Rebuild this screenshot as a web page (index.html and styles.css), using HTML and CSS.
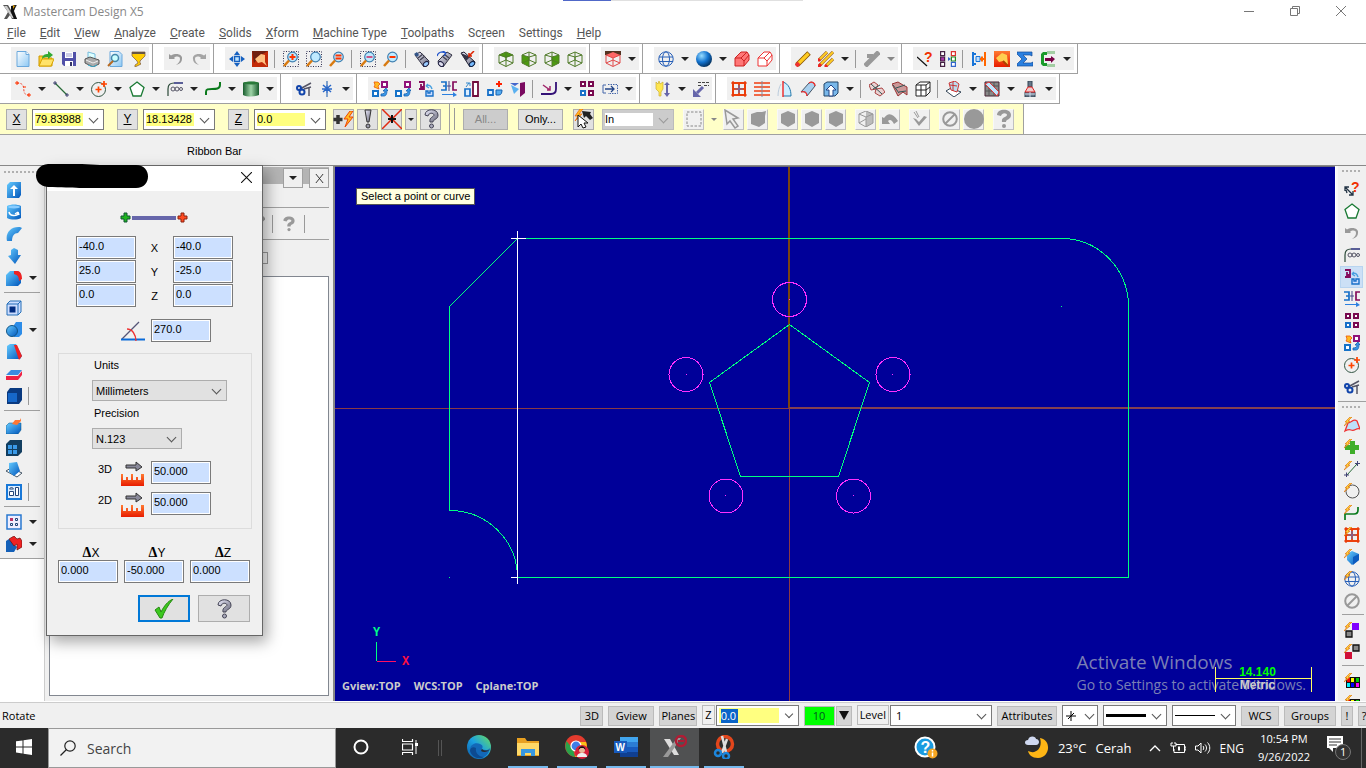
FILE: index.html
```html
<!DOCTYPE html>
<html lang="en">
<head>
    <meta charset="UTF-8">
    <meta name="viewport" content="width=device-width, initial-scale=1.0">
    <title>Mastercam Design X5</title>
    <link rel="stylesheet" href="styles.css">
</head>
<body>
    <!-- icon sprite -->
    <svg class="sprite" aria-hidden="true">
        <defs>
            <linearGradient id="blue" x1="0" y1="0" x2="1" y2="1"><stop offset="0" stop-color="#6cf"/><stop offset="1" stop-color="#05b"/></linearGradient>
            <linearGradient id="sheet" x1="0" y1="0" x2="1" y2="1"><stop offset="0" stop-color="#fff"/><stop offset="1" stop-color="#8cc8f4"/></linearGradient>
            <linearGradient id="green" x1="0" x2="1"><stop offset="0" stop-color="#175c2c"/><stop offset=".5" stop-color="#9fd4a8"/><stop offset="1" stop-color="#175c2c"/></linearGradient>
            <linearGradient id="steel" x1="0" y1="0" x2="1" y2="1"><stop offset="0" stop-color="#eef"/><stop offset="1" stop-color="#667"/></linearGradient>
            <linearGradient id="fire" x1="0" y1="0" x2="0" y2="1"><stop offset="0" stop-color="#ff7a30"/><stop offset="1" stop-color="#e81c00"/></linearGradient>
            <radialGradient id="ball" cx=".35" cy=".3" r=".8"><stop offset="0" stop-color="#9df"/><stop offset=".5" stop-color="#1474d0"/><stop offset="1" stop-color="#024"/></radialGradient>
            <linearGradient id="edge" x1="0" y1="1" x2="1" y2="0"><stop offset="0" stop-color="#0c59a4"/><stop offset=".5" stop-color="#1ba0e2"/><stop offset="1" stop-color="#6be05a"/></linearGradient>
        </defs>
        <symbol id="bolt" viewBox="0 0 16 16"><path d="M6 0L1 5h2L0 9l6-5H4l4-4z" fill="#ffd23a" stroke="#e07818" stroke-width=".7"/></symbol>
        <symbol id="app" viewBox="0 0 16 16"><path d="M1 1h5l3 5 3-5h3l-4 7 4 7h-5l-2-4-3 4H2l4-7z" fill="#555"/><path d="M2 2h3l7 12h-2z" fill="#ccc"/><path d="M9 2l5-1-2 6 3 8h-3L9 8z" fill="#111"/><path d="M11 1l2 1-2 3z" fill="#d90"/></symbol>
        <symbol id="new" viewBox="0 0 16 16"><path d="M2 .5h9l3 3v12H2z" fill="url(#sheet)" stroke="#6aa8dc"/><path d="M11 .5v3h3" fill="#fff" stroke="#6aa8dc"/></symbol>
        <symbol id="open" viewBox="0 0 16 16"><path d="M1 15V5h4l1 2h8v8z" fill="#fc3" stroke="#c90"/><path d="M1 15l3-7h12l-3 7z" fill="#ffe36a" stroke="#d9a400"/><path d="M4 8c0-4 3-5 6-5V0l5 4-5 4V6c-2 0-4 0-6 2z" fill="#3a3"/></symbol>
        <symbol id="save" viewBox="0 0 16 16"><path d="M1 1h14v14H3l-2-2z" fill="#5050a8"/><path d="M4 1h8v6H4zM4 10h8v5H4z" fill="#fff"/><path d="M5 3h6M5 5h6" stroke="#99c"/><path d="M9 11h2v4H9z" fill="#336"/></symbol>
        <symbol id="print" viewBox="0 0 16 16"><path d="M4 1l7 2v6l-7-2z" fill="#dff" stroke="#7bd"/><path d="M1 8l5-2 9 3v4l-6 3-8-4z" fill="#aaa" stroke="#555"/><path d="M2 9l7 3 5-2" stroke="#eee" fill="none"/><path d="M4 14l5 2 4-2" stroke="#3ac" fill="none"/></symbol>
        <symbol id="preview" viewBox="0 0 16 16"><path d="M3 .5h9l3 3v12H3z" fill="url(#sheet)" stroke="#6aa8dc"/><circle cx="8" cy="7" r="3.5" fill="#cff" stroke="#48a" stroke-width="1.5"/><path d="M6 10l-5 5" stroke="#b76a20" stroke-width="2"/></symbol>
        <symbol id="cup" viewBox="0 0 16 16"><path d="M2 1h13v4l-5 5v2l1 1-6 3v-2l3-2-1-2-5-5z" fill="#fc0" stroke="#864" stroke-width=".8"/><path d="M2 1h13v2H2z" fill="#654"/></symbol>
        <symbol id="undo" viewBox="0 0 16 16"><path d="M1 8V3l2 1.500C9 1 15 4 14 8c0 3-2 5-6 6 3-2 4-4 4-6 0-3-4-3-6-1l1 1z" fill="#999"/></symbol>
        <symbol id="redo" viewBox="0 0 16 16"><path d="M15 8V3l-2 1.500C7 1 1 4 2 8c0 3 2 5 6 6-3-2-4-4-4-6 0-3 4-3 6-1L9 8z" fill="#a4a4a4"/></symbol>
        <symbol id="pan" viewBox="0 0 16 16"><path d="M8 0l3 4H5zM8 16l3-4H5zM0 8l4-3v6zM16 8l-4-3v6z" fill="#1560c0"/><path d="M5.500 5.500h5v5h-5z" fill="#bfe4ff" stroke="#1560c0" stroke-width="1.500"/></symbol>
        <symbol id="repaint" viewBox="0 0 16 16"><path d="M0 0h16v16H0z" fill="#c22a08"/><path d="M0 0h16l-7 4-7 8z" fill="#702010"/><path d="M3 8l6-5 4 1v7l2 4-5-4-4 1z" fill="#ffc080"/></symbol>
        <symbol id="repaint2" viewBox="0 0 16 16"><path d="M0 0h16v16H0z" fill="url(#fire)"/><path d="M2 7l6-5 5 2 1 10-5-4-4 1z" fill="#ffcf50"/><path d="M9 10l5 5" stroke="#a40" stroke-width="2"/></symbol>
        <symbol id="lens" viewBox="0 0 16 16"><circle cx="9.500" cy="6" r="4.800" fill="#bfeaff" stroke="#3f7fb0" stroke-width="1.200"/><path d="M6 9.500L1 15" stroke="#d87a10" stroke-width="2.500"/></symbol>
        <symbol id="dots" viewBox="0 0 16 16"><path d="M.5.5h15v15H.5z" fill="none" stroke="#335" stroke-dasharray="1 1.500"/></symbol>
        <symbol id="zoom-in" viewBox="0 0 16 16"><use href="#dots"/><use href="#lens"/><path d="M9.500 3v6M6.500 6h6" stroke="#f30" stroke-width="2"/></symbol>
        <symbol id="zoom-win" viewBox="0 0 16 16"><use href="#dots"/><use href="#lens"/></symbol>
        <symbol id="zoom-eq" viewBox="0 0 16 16"><use href="#lens"/><path d="M6.500 4.500h6M6.500 7.500h6" stroke="#f30" stroke-width="1.800"/></symbol>
        <symbol id="zoom-sel" viewBox="0 0 16 16"><use href="#dots"/><use href="#lens"/><path d="M6.500 6h6" stroke="#c58" stroke-width="2"/></symbol>
        <symbol id="zoom-out" viewBox="0 0 16 16"><use href="#lens"/><path d="M6.500 6h6" stroke="#f30" stroke-width="2"/></symbol>
        <symbol id="spin" viewBox="0 0 16 16"><path d="M1 4l5-3 9 9-1 4-4 2z" fill="url(#steel)" stroke="#334"/><path d="M4 7l5-4M6 9l5-4" stroke="#445" stroke-width="1.500"/><ellipse cx="12" cy="13" rx="3" ry="2" transform="rotate(-40 12 13)" fill="#9cf" stroke="#224"/><path d="M0 3l3-2 2 3-2 2z" fill="#358"/></symbol>
        <symbol id="spin2" viewBox="0 0 16 16"><path d="M15 4l-5-3-9 9 1 4 4 2z" fill="url(#steel)" stroke="#334"/><path d="M12 7L7 3M10 9L5 5" stroke="#445" stroke-width="1.500"/><ellipse cx="4" cy="13" rx="3" ry="2" transform="rotate(40 4 13)" fill="#dde" stroke="#224"/><path d="M0 5c1-4 5-5 9-3M9 2L6 0M9 2L7 5" stroke="#25c" fill="none" stroke-width="1.300"/></symbol>
        <symbol id="spin3" viewBox="0 0 16 16"><path d="M1 2l3-1 11 10-1 3-4 2z" fill="url(#steel)" stroke="#223"/><path d="M1 2l5 8 4-4z" fill="#334"/><ellipse cx="12" cy="13" rx="3" ry="2" transform="rotate(-40 12 13)" fill="#7bf" stroke="#124"/><path d="M14 0L9 5V2M9 5h3" stroke="#d20" stroke-width="1.500" fill="none"/></symbol>
        <symbol id="wirecube" viewBox="0 0 16 16"><path d="M1 4l7-3 7 3v8l-7 3.500L1 12zM1 4l7 2 7-2M8 6v9.500M1 12l7-3 7 3M8 1v8" fill="none" stroke="#4f7a28" stroke-width="1"/></symbol>
        <symbol id="cube-top" viewBox="0 0 16 16"><path d="M1 4l7-3 7 3-7 3z" fill="#4c9a10"/><use href="#wirecube"/></symbol>
        <symbol id="cube-front" viewBox="0 0 16 16"><path d="M1 4l7 2v9.500L1 12z" fill="#4c9a10"/><use href="#wirecube"/></symbol>
        <symbol id="cube-side" viewBox="0 0 16 16"><path d="M8 6l7-2v8l-7 3.500z" fill="#4c9a10"/><use href="#wirecube"/></symbol>
        <symbol id="cplane" viewBox="0 0 16 16"><path d="M0 0h16v4H0z" fill="#532"/><path d="M1 4l7-3 7 3-7 3z" fill="#f66"/><path d="M1 4v8l7 3.500 7-3.500V4L8 7zM8 7v8M1 12l7-3 7 3" fill="none" stroke="#e04848"/></symbol>
        <symbol id="globe" viewBox="0 0 16 16"><g fill="none" stroke="#2860b8"><circle cx="8" cy="8" r="7.200"/><ellipse cx="8" cy="8" rx="3.500" ry="7.200"/><path d="M1 6h14M1 10.500h14"/></g></symbol>
        <symbol id="sphere" viewBox="0 0 16 16"><circle cx="8" cy="8" r="8" fill="url(#ball)"/></symbol>
        <symbol id="redsolid" viewBox="0 0 16 16"><path d="M1 7l6-6h6l2 3v5l-5 6H1z" fill="#f77" stroke="#c22"/><path d="M1 7h6l3 3v5M7 7l6-6M10 10l5-6" fill="none" stroke="#c22"/></symbol>
        <symbol id="redwire" viewBox="0 0 16 16"><path d="M1 7l6-6h6l2 3v5l-5 6H1zM1 7h6l3 3v5M7 7l6-6M10 10l5-6" fill="#fff" stroke="#e33"/></symbol>
        <symbol id="pencil" viewBox="0 0 16 16"><path d="M2 14L14 2" stroke="#850" stroke-width="5"/><path d="M2.500 13.500L13.500 2.500" stroke="#fc2" stroke-width="3.200"/><path d="M1 15l3-3" stroke="#e33" stroke-width="4"/></symbol>
        <symbol id="pencils" viewBox="0 0 16 16"><path d="M1 9l8-8M1 15L15 1M8 15l7-7" stroke="#963" stroke-width="3.200"/><path d="M1 9l8-8M1 15L15 1M8 15l7-7" stroke="#fc2" stroke-width="2"/><path d="M0 10l2-2M0 16l3-3M7 16l2-2" stroke="#e22" stroke-width="3"/></symbol>
        <symbol id="undelete" viewBox="0 0 16 16"><path d="M1 15L15 1" stroke="#999" stroke-width="5"/><path d="M3 3h6v4H3z" fill="#999"/></symbol>
        <symbol id="ask-line" viewBox="0 0 16 16"><path d="M0 6l10 9" stroke="#111" stroke-width="1.300"/><text x="7" y="11" class="glyph" fill="#f03000">?</text></symbol>
        <symbol id="chain" viewBox="0 0 16 16"><g fill="#fff" stroke-width="1.200"><path d="M.6.6h4v4h-4zM.6 11.400h4v4h-4z" stroke="#424"/><path d="M.6 6h4v4h-4z" fill="#a3a" stroke="#424"/><path d="M11.400.6h4v4h-4z" stroke="#d33"/><path d="M11.400 6h4v4h-4z" stroke="#282"/><path d="M11.400 11.400h4v4h-4z" stroke="#36c"/></g><path d="M5 8h3V6l3 2-3 2V8" fill="#36c"/></symbol>
        <symbol id="mate" viewBox="0 0 16 16"><path d="M2 1v14M2 3h3M2 13h3" stroke="#1874d8" stroke-width="2" fill="none"/><path d="M5 5.500h4v5H5z" fill="#bdf" stroke="#1874d8"/><path d="M14 1v14M9 8h5M11 5.500v5" stroke="#f60" stroke-width="2" fill="none"/></symbol>
        <symbol id="sigma" viewBox="0 0 16 16"><path d="M0 1h15v4l-2-1H6l4 4-4 4h8l2-1v4H0v-2l5-5-5-5z" fill="#2a80e0" stroke="#124a9a" stroke-width=".7"/></symbol>
        <symbol id="ram" viewBox="0 0 16 16"><path d="M7 1H3L1 3v10l2 2h4v-3H4V4h3z" fill="#1a9a2a"/><path d="M5 7h6V5l4 3-4 4v-2H5z" fill="#704"/><path d="M8 0v3M10 0v3M12 0v3M14 0v3M8 13v3M10 13v3M12 13v3M14 13v3" stroke="#5a5"/></symbol>
        <symbol id="spline-pts" viewBox="0 0 16 16"><path d="M2 2c12 0 2 12 12 12" fill="none" stroke="#e43" stroke-dasharray="2 1.500"/><path d="M0 2h4M2 0v4M12 14h4M14 12v4M8 6h3" stroke="#f30"/></symbol>
        <symbol id="line" viewBox="0 0 16 16"><path d="M2 2l12 12" stroke="#286a38" stroke-width="1.300"/><path d="M0 2h4M2 0v4M12 14h4M14 12v4" stroke="#447"/></symbol>
        <symbol id="circle" viewBox="0 0 16 16"><circle cx="7.500" cy="8.500" r="7" fill="none" stroke="#354"/><path d="M7.500 5.500v6M4.500 8.500h6M13 0v6M10 3h6" stroke="#f40" stroke-width="1.700"/></symbol>
        <symbol id="pent" viewBox="0 0 16 16"><path d="M8 1l7 5.500-3 8.500H4L1 6.500z" fill="#fff" stroke="#1a7a34" stroke-width="1.300"/></symbol>
        <symbol id="fillet" viewBox="0 0 16 16"><path d="M1 15V8c0-4 2-6 6-6h9" fill="none" stroke="#2a4838" stroke-width="1.200"/><path d="M7 2h9" stroke="#449" stroke-width="1.400"/><g fill="none" stroke="#556"><circle cx="6" cy="8" r="2"/><circle cx="10" cy="8" r="2"/><circle cx="14" cy="8" r="1.500"/></g></symbol>
        <symbol id="spline" viewBox="0 0 16 16"><path d="M1 14v-3c0-3 2-3 6-3s8 0 8-4V1" fill="none" stroke="#0a7a1c" stroke-width="2"/></symbol>
        <symbol id="cyl" viewBox="0 0 16 16"><path d="M0 2c4-2 12-2 16 0v12c-4 2-12 2-16 0z" fill="url(#green)"/><ellipse cx="8" cy="2" rx="8" ry="1.500" fill="#2a7a3a"/></symbol>
        <symbol id="trim" viewBox="0 0 16 16"><path d="M4 8l11-6M8 8l7-2M13 7v8" stroke="#556" stroke-width="1.500"/><circle cx="3" cy="7" r="2" fill="none" stroke="#14a" stroke-width="2"/><circle cx="6" cy="11" r="2.500" fill="none" stroke="#14a" stroke-width="2"/></symbol>
        <symbol id="break" viewBox="0 0 16 16"><path d="M8 0v4M8 12v4" stroke="#15a"/><path d="M4 4l8 7M12 4l-8 7M8 4v8M3 8h10" stroke="#2a68c8" stroke-width="1.500"/></symbol>
        <symbol id="squares" viewBox="0 0 16 16"><path d="M10 1h5v5h-5z" fill="#fff" stroke="#91137a" stroke-width="2"/><path d="M1 10h5v5H1z" fill="#fff" stroke="#1672c8" stroke-width="2"/><path d="M9 15h3c2 0 3-2 3-6l1 1-2-3-3 3h2c0 2-1 3-4 3z" fill="#3a98e8" stroke="#1460b0" stroke-width=".8"/></symbol>
        <symbol id="dyn" viewBox="0 0 16 16"><use href="#squares"/><path d="M2 1h4l2 2-2 2 1 3-5-2 1-2z" fill="#fb2" stroke="#e50" stroke-width=".8"/></symbol>
        <symbol id="rotate" viewBox="0 0 16 16"><path d="M1 1h5v7H1M3 3v3h3" fill="none" stroke="#850c5c" stroke-width="1.800"/><path d="M8 5c3-2 5 0 6 3M8 5l2-2M8 5l3 2" stroke="#48a0e0" stroke-width="1.500" fill="none"/><path d="M8 10v5h7v-5h-3v2h-2v-2z" fill="#cdf" stroke="#1870c8" stroke-width="1.400"/></symbol>
        <symbol id="mirror" viewBox="0 0 16 16"><path d="M0 1h5v8H0M2 5h3" fill="none" stroke="#1870c8" stroke-width="1.700"/><path d="M16 1h-4v8h4" fill="none" stroke="#850c5c" stroke-width="1.700"/><path d="M8 0v10M6 5h4" stroke="#448"/><path d="M1 13h11v-2l4 3-4 2v-2H1z" fill="#2c80e0"/></symbol>
        <symbol id="scale" viewBox="0 0 16 16"><path d="M9 1h5v14H9z" fill="#fff" stroke="#710c3c" stroke-width="1.800"/><path d="M1 8h5v7H1z" fill="#def" stroke="#1870c8" stroke-width="1.700"/><path d="M2 6l3-4M2 2h4v3" stroke="#38c" fill="none"/></symbol>
        <symbol id="offset" viewBox="0 0 16 16"><path d="M12 0v6M9 3h6" stroke="#f20" stroke-width="2"/><path d="M1 9h5v5H1z" fill="#def" stroke="#1870c8" stroke-width="1.800"/><path d="M9 14h3c2 0 3-2 3-5H9z" fill="#5ae" stroke="#1460b0"/></symbol>
        <symbol id="project" viewBox="0 0 16 16"><path d="M10 2l5-1v11l-5 4z" fill="#7a0a60"/><path d="M0 2h9l-4 3z" fill="#46c"/><path d="M1 4l8 4-5 5z" fill="#5ab0f0"/></symbol>
        <symbol id="roll" viewBox="0 0 16 16"><path d="M0 13h10c3 0 5-2 5-5V1" fill="none" stroke="#317" stroke-width="1.800"/><path d="M2 4l7 5M9 5v4H6" stroke="#a0256a" stroke-width="1.500" fill="none"/></symbol>
        <symbol id="array" viewBox="0 0 16 16"><g fill="#fff" stroke-width="2"><path d="M2 1h4v4H2zM10 1h4v4h-4zM10 10h4v4h-4z" stroke="#780a50"/><path d="M2 10h4v4H2z" stroke="#1870c8"/></g></symbol>
        <symbol id="drag" viewBox="0 0 16 16"><path d="M4 4H1v8h3" fill="none" stroke="#46a"/><path d="M6 3.500h9.500v9H6" fill="none" stroke="#46a" stroke-dasharray="1.500 1"/><path d="M3 8h8M9 5l3 3-3 3" fill="none" stroke="#248" stroke-width="1.300"/></symbol>
        <symbol id="bulb" viewBox="0 0 16 16"><path d="M1 1l2 2 1-3 1 3 3-2v7l-2 3v4H4v-4L1 8z" fill="#ffe650" stroke="#ccb030" stroke-width=".7"/><path d="M12 1l3 3h-2v8h2l-3 4-3-4h2V4H9z" fill="#66a"/></symbol>
        <symbol id="notes" viewBox="0 0 16 16"><path d="M5 1.500h11M5 4.500h4M11 4.500h5" stroke="#444" stroke-dasharray="3 1"/><path d="M10 6l-6 6" stroke="#66a" stroke-width="3"/><path d="M0 8v8h8z" fill="#66a"/></symbol>
        <symbol id="net" viewBox="0 0 16 16"><path d="M2 2h12v12H2zM2 8h12M8 2v12" fill="none" stroke="#f04a10" stroke-width="2"/><path d="M0 2h16M0 14h16M2 0v16M14 0v16" stroke="#e83808" stroke-width="1.200"/><path d="M8 4v8M4 8h8" stroke="#66a" stroke-width="1.200"/></symbol>
        <symbol id="ruled" viewBox="0 0 16 16"><path d="M0 2h16M0 6h16M0 10h16M0 14h16" stroke="#f03e10" stroke-width="1.600"/><path d="M8 0v16" stroke="#889"/></symbol>
        <symbol id="revolve" viewBox="0 0 16 16"><path d="M6 1c6 2 8 8 8 14H6" fill="#cdeeff" stroke="#27a"/><path d="M6 0v16" stroke="#e33" stroke-width="1.500"/><path d="M4 3c-2 3-3 8-3 12" fill="none" stroke="#bcd"/></symbol>
        <symbol id="sweep" viewBox="0 0 16 16"><path d="M1 11l8-9c3-2 6 0 6 3l-8 10c0-4-3-5-6-4z" fill="#a9d0ee" stroke="#456"/><path d="M1 11c3-1 6 0 6 4M9 2c3-2 6 0 6 3" fill="none" stroke="#e33" stroke-width="1.300"/></symbol>
        <symbol id="draft" viewBox="0 0 16 16"><path d="M1 3l3-2h11v11l-3 3H1z" fill="#79b8ea" stroke="#246"/><path d="M8 4l5 5h-3v6H6V9H3z" fill="#fff" stroke="#248"/></symbol>
        <symbol id="surf1" viewBox="0 0 16 16"><path d="M0 4l5-3 4 3-2 4-5 1zM7 8l6-1 3 4-5 4-5-3z" fill="#ead2d2" stroke="#a44"/><path d="M2 3l11 10M4 8l7-4" stroke="#355"/></symbol>
        <symbol id="surf2" viewBox="0 0 16 16"><path d="M0 3l6-2 5 3 4 2v8l-4-3-5 4z" fill="#c99" stroke="#933"/><path d="M1 4l6 8M4 7l9-3M7 11l7-1" stroke="#355"/></symbol>
        <symbol id="box" viewBox="0 0 16 16"><path d="M1 4l4-3h10v10l-4 4H1zM1 4h10v11M11 4l4-3M1 9h10M6 4v11M11 9l4-3" fill="#fff" stroke="#222"/></symbol>
        <symbol id="surf3" viewBox="0 0 16 16"><path d="M0 10l5-3 10 4-7 5z" fill="#fff" stroke="#345"/><path d="M3 2l6-2 4 3-2 8-6-2z" fill="#bde" stroke="#c33"/><path d="M4 4l7 1M7 1v9" stroke="#c33"/></symbol>
        <symbol id="surf4" viewBox="0 0 16 16"><path d="M1 1h14v14H1z" fill="#888" stroke="#423"/><path d="M5 1v14M10 1v14M1 5h14M1 10h14" stroke="#555"/><path d="M1 3l4-2 10 10-2 4z" fill="#bde6ff" stroke="#d33"/></symbol>
        <symbol id="tool" viewBox="0 0 16 16"><path d="M6 0h4v6H6zM3 11h10v5H3z" fill="#678" stroke="#345"/><path d="M6 6h4l3 5H3z" fill="#ecc" stroke="#d22"/><path d="M3 13h10M8 11v5" stroke="#cde"/></symbol>
        <symbol id="plusbolt" viewBox="0 0 21 16"><path d="M5 4v9M.5 8.500h9" stroke="#333" stroke-width="3.500"/><path d="M17 0l-6 8h4l-3 8 8-10h-4l4-6z" fill="#fb2" stroke="#e40"/></symbol>
        <symbol id="bang" viewBox="0 0 20 20"><path d="M7 1h6l-2 12H9z" fill="url(#steel)" stroke="#333"/><circle cx="10" cy="17" r="2" fill="#99a" stroke="#333"/></symbol>
        <symbol id="redx" viewBox="0 0 20 20"><path d="M0 0l20 20M20 0L0 20" stroke="#e02a10" stroke-width="1.500"/><path d="M10 6v8M6 10h8" stroke="#111" stroke-width="2"/></symbol>
        <symbol id="help" viewBox="0 0 20 20"><path d="M4 6c0-7 13-7 13 0 0 5-5 4-5 7H9c-1-5 4-5 4-7s-5-3-6 1z" fill="url(#steel)" stroke="#445"/><circle cx="10.500" cy="17" r="2" fill="#aab" stroke="#445"/></symbol>
        <symbol id="help-off" viewBox="0 0 20 20"><path d="M3 6c0-7 14-7 14 0 0 5-5 4-5 7H8c-1-5 5-5 5-7s-5-3-6 1z" fill="#999"/><circle cx="10" cy="17" r="2" fill="#999"/></symbol>
        <symbol id="cursor" viewBox="0 0 20 20"><path d="M8 2l9 1-1 2 3 4-3 2-4-4-2 2z" fill="#222"/><path d="M6 0L1 7h3L1 12l7-7H5l4-5z" fill="#fb2" stroke="#e60" stroke-width=".7"/><path d="M4 6v12l3-3 2 4 3-1-2-4h4z" fill="#fff" stroke="#111"/></symbol>
        <symbol id="cursor-off" viewBox="0 0 20 20"><path d="M1 1l2 14 3-3 5 7 3-2-5-7 5-1z" fill="#eee" stroke="#999" stroke-width="1.500"/></symbol>
        <symbol id="dashsel" viewBox="0 0 16 16"><path d="M1 1h14v14H1z" fill="none" stroke="#888" stroke-dasharray="2.500 1.500"/></symbol>
        <symbol id="hex" viewBox="0 0 16 16"><path d="M8 0l7 3v9l-7 4-7-4V3z" fill="#999"/></symbol>
        <symbol id="blob" viewBox="0 0 16 16"><path d="M1 3l6-2h5l4-1-1 5v7l-6 4-8-3z" fill="#999"/></symbol>
        <symbol id="halfcube" viewBox="0 0 16 16"><path d="M8 0l7 3v9l-7 4z" fill="#bbb"/><path d="M8 0L1 3v9l7 4 7-4V3zM1 3l7 3 7-3M8 6v10M1 12l7-4" fill="none" stroke="#999"/></symbol>
        <symbol id="bend" viewBox="0 0 16 16"><path d="M0 13V6l2 1C6 1 11 2 16 10l-4 3C10 9 8 8 6 10l2 3z" fill="#999"/></symbol>
        <symbol id="vcheck" viewBox="0 0 16 16"><path d="M1 7l6 8 8-9-3-1-5 6-3-3z" fill="#999"/><path d="M2 1l4 6M4 0l3 6" stroke="#999"/></symbol>
        <symbol id="no" viewBox="0 0 16 16"><circle cx="8" cy="8" r="6.800" fill="none" stroke="#999" stroke-width="2"/><path d="M3.500 12.500l9-9" stroke="#999" stroke-width="2"/></symbol>
        <symbol id="disc" viewBox="0 0 20 20"><circle cx="10" cy="10" r="10" fill="#999"/></symbol>
        <!-- solids toolbar -->
        <symbol id="extrude" viewBox="0 0 16 16"><path d="M1 3l3-3h11v13l-2 3H1z" fill="url(#blue)"/><path d="M8 3l4 4H9v7H7V7H4z" fill="#fff"/></symbol>
        <symbol id="s-revolve" viewBox="0 0 16 16"><path d="M1 2c4-2 10-2 14 0v12c-4 2-10 2-14 0z" fill="url(#blue)"/><ellipse cx="8" cy="3" rx="6" ry="1.500" fill="#8cf"/><path d="M3 8c1 5 9 4 9 1M12 8l-3 2M12 8l1 3" stroke="#fff" stroke-width="1.500" fill="none"/></symbol>
        <symbol id="s-sweep" viewBox="0 0 16 16"><path d="M1 15c-2-8 4-15 13-14l2 1-4 5c-4 0-6 3-6 8z" fill="url(#blue)"/></symbol>
        <symbol id="s-loft" viewBox="0 0 16 16"><path d="M5 2l3-2 4 2v5h3l-6 9-7-8 3-1z" fill="url(#blue)"/></symbol>
        <symbol id="s-fillet" viewBox="0 0 16 16"><path d="M0 5l4-4h8l3 3v9l-3 3H0z" fill="url(#blue)"/><path d="M8 1h4c3 1 4 4 4 8l-3 2c0-5-2-6-5-7z" fill="#e22"/></symbol>
        <symbol id="s-shell" viewBox="0 0 16 16"><path d="M1 4l3-3h11v11l-3 3H1zM1 4h11v11M12 4l3-3" fill="#cdf" stroke="#246fb8"/><path d="M3.500 6.500h6v6h-6z" fill="#012c80"/></symbol>
        <symbol id="s-bool" viewBox="0 0 16 16"><path d="M8 3l2-3h6v12l-3 3H8z" fill="#2c8ce8"/><circle cx="6" cy="9" r="5.500" fill="url(#blue)" stroke="#158"/></symbol>
        <symbol id="s-draft" viewBox="0 0 16 16"><path d="M1 2l3-2h6l6 12-2 3H1z" fill="url(#blue)"/><path d="M8 1h3l5 11-3 4z" fill="#e22"/></symbol>
        <symbol id="s-thick" viewBox="0 0 16 16"><path d="M0 9l5-5h11l-4 5z" fill="#3a8be0"/><path d="M0 10h12l4-5v4l-4 5H0z" fill="#e24"/></symbol>
        <symbol id="s-block" viewBox="0 0 16 16"><path d="M1 4l3-4h12v12l-3 4H1z" fill="#0a3a80"/><path d="M2 5h9v9H2z" fill="#1667c8"/></symbol>
        <symbol id="s-history" viewBox="0 0 16 16"><path d="M0 8l3-3h12v7l-3 4H0z" fill="url(#blue)" stroke="#058" stroke-width=".5"/><path d="M6 6l3-4h5l1-2v3l-4 4z" fill="#f73"/></symbol>
        <symbol id="s-grid" viewBox="0 0 16 16"><path d="M0 4l4-4h12v12l-4 4H0z" fill="#123e60"/><path d="M2 5h4v4H2zM7 5h4v4H7zM2 10h4v4H2zM7 10h4v4H7z" fill="#3a9ae8"/></symbol>
        <symbol id="s-sheet" viewBox="0 0 16 16"><path d="M0 9l5-3 11 5-5 4z" fill="#fff" stroke="#456"/><path d="M3 1l8-1 3 9-6 5-5-4z" fill="url(#blue)"/></symbol>
        <symbol id="s-layout" viewBox="0 0 16 16"><path d="M1 1h14v14H1z" fill="#def" stroke="#1878d8" stroke-width="2"/><path d="M3.500 7.500h4v4h-4zM9.500 3.500h3v8h-3zM3.500 5c1-2 3-2 4 0z" fill="#fff" stroke="#247"/></symbol>
        <symbol id="s-find" viewBox="0 0 16 16"><path d="M1 1h14v14H1z" fill="#eef" stroke="#2878d0" stroke-width="1.500"/><path d="M4 4h3v3H4z" fill="#b36"/><path d="M9.500 4.500h2v2h-2zM4.500 9.500h2v2h-2zM9.500 9.500h2v2h-2z" fill="none" stroke="#247"/></symbol>
        <symbol id="s-red" viewBox="0 0 16 16"><path d="M0 5l3-2 8 8-3 5H0z" fill="#1460b8"/><path d="M3 3l5-3 3 3 3-1 2 3v6l-5 3V8l-3 2z" fill="#e22" stroke="#611" stroke-width=".7"/></symbol>
        <!-- recent / autocursor toolbars -->
        <symbol id="ask-arrow" viewBox="0 0 16 16"><path d="M1 6l8 8M1 10V6h4M9 10v4H5M3 12l-1-3" stroke="#234" stroke-width="1.300" fill="none"/><text x="7" y="11" class="glyph" fill="#f03000">?</text></symbol>
        <symbol id="b-surf" viewBox="0 0 16 16"><path d="M1 14l3-8c4 0 5-5 9-2l3 8c-4-2-5 3-9 1-2-1-4 0-6 1z" fill="#bde0fa" stroke="#e33" stroke-width="1.300"/><use href="#bolt"/></symbol>
        <symbol id="b-plus" viewBox="0 0 16 16"><path d="M6 2h5v4h4v5h-4v4H6v-4H1V6h5z" fill="#3fae2a"/><use href="#bolt"/></symbol>
        <symbol id="b-line" viewBox="0 0 16 16"><path d="M3 14L13 3" stroke="#286a38"/><path d="M0 14h5M2.500 11.500v5M11 2.500h5M13.500 0v5" stroke="#447"/><use href="#bolt"/></symbol>
        <symbol id="b-circ" viewBox="0 0 16 16"><circle cx="8.500" cy="8.500" r="6.500" fill="none" stroke="#555"/><use href="#bolt"/></symbol>
        <symbol id="b-spl" viewBox="0 0 16 16"><path d="M1 15V9h9c3 0 4-1 4-4V2" fill="none" stroke="#0a7a1c" stroke-width="1.700"/><use href="#bolt"/></symbol>
        <symbol id="b-net" viewBox="0 0 16 16"><use href="#net"/><use href="#bolt"/></symbol>
        <symbol id="b-cube" viewBox="0 0 16 16"><path d="M8 2l7 3v6l-7 5-5-5V5z" fill="url(#blue)"/><path d="M9 8l6-3v6l-6 5z" fill="#0c5cc0"/><use href="#bolt"/></symbol>
        <symbol id="b-globe" viewBox="0 0 16 16"><use href="#globe"/><use href="#bolt"/></symbol>
        <symbol id="b-lvl1" viewBox="0 0 16 16"><path d="M8 1h7v7H8z" fill="#8000ff"/><path d="M2 9h6v6H2z" fill="#888" stroke="#111" stroke-width="1.300"/><use href="#bolt"/></symbol>
        <symbol id="b-lvl2" viewBox="0 0 16 16"><path d="M9 1h6v6H9z" fill="#888" stroke="#111" stroke-width="1.300"/><path d="M1 8h7v7H1z" fill="#d01038"/><use href="#bolt"/></symbol>
        <symbol id="b-color" viewBox="0 0 16 16"><path d="M2 4h14v11H2z" fill="#111"/><path d="M7 5h3v4H7z" fill="#ff0"/><path d="M12 5h3v4h-3z" fill="#0c0"/><path d="M3 10h3v4H3z" fill="#0ef"/><path d="M7 10h3v4H7z" fill="#00f"/><path d="M12 10h3v4h-3z" fill="#f0f"/><path d="M3 5h3v4H3z" fill="#e00"/><use href="#bolt"/></symbol>
        <!-- dialog -->
        <symbol id="angle" viewBox="0 0 24 20"><path d="M1 18L18 1" stroke="#557" stroke-width="1.300"/><path d="M0 18.500h24" stroke="#0a6ad8" stroke-width="2"/><path d="M6 8c5 0 9 5 9 13" fill="none" stroke="#e33" stroke-width="1.300"/></symbol>
        <symbol id="ruler" viewBox="0 0 24 26"><path d="M5 4h10V1l6 5-6 4V7H5z" fill="#889" stroke="#333"/><path d="M0 13h2v6h3v-3h2v3h3v-6h2v6h3v-3h2v3h3v-6h3v12H0z" fill="url(#fire)"/></symbol>
        <symbol id="tick" viewBox="0 0 20 20"><path d="M1 11l4-3 2 5C10 7 14 2 19 0 14 6 10 13 8 19H6z" fill="#3cc81e" stroke="#258a10"/></symbol>
        <!-- taskbar -->
        <symbol id="win" viewBox="0 0 16 16"><path d="M0 2.300l6.500-.9v6H0zM7.500 1.200L16 0v7.400H7.500zM0 8.500h6.500v6L0 13.600zM7.500 8.500H16V16l-8.500-1.200z" fill="#fff"/></symbol>
        <symbol id="search" viewBox="0 0 16 16"><circle cx="10" cy="6" r="5.200" fill="none" stroke="#222" stroke-width="1.200"/><path d="M6.500 9.500L.5 15.500" stroke="#222" stroke-width="1.300"/></symbol>
        <symbol id="cortana" viewBox="0 0 16 16"><circle cx="8" cy="8" r="6.500" fill="none" stroke="#fff" stroke-width="2"/></symbol>
        <symbol id="taskview" viewBox="0 0 16 16"><path d="M.5 0v2.500h10V0M.5 16v-2.500h10V16M.5 5h10v6H.5z" fill="none" stroke="#fff" stroke-width="1.200"/><path d="M14 1v14" stroke="#fff"/><path d="M13 4h3v3h-3z" fill="#fff"/></symbol>
        <symbol id="t-edge" viewBox="0 0 24 24"><circle cx="12" cy="12" r="12" fill="url(#edge)"/><path d="M3 17C2 9 9 7 13 9c3 1 3 3 2 5 3 2 7 1 8-1-1 7-7 11-12 10-4 0-7-3-8-6z" fill="#1368b8"/><path d="M9 13c-1 5 3 9 8 9-6 3-12 0-14-6 0-3 3-5 6-3z" fill="#0d4a90"/><path d="M15 14c2 2 6 2 8 0-2 3-6 4-9 2z" fill="#2b2b2b"/></symbol>
        <symbol id="t-folder" viewBox="0 0 24 24"><path d="M1 3h8l2 3h12v15H1z" fill="#e8a020"/><path d="M1 8h22v12H1z" fill="#ffd968"/><path d="M5 21v-7h14v7h-4v-3H9v3z" fill="#3898e0"/></symbol>
        <symbol id="t-chrome" viewBox="0 0 24 24"><circle cx="11" cy="11" r="11" fill="#e33b2e"/><path d="M1.500 6L8 14l2 8C3 21-2 14 1.500 6z" fill="#2aa24a"/><path d="M12 7h9c3 7-2 15-11 15l5-8z" fill="#fbc116"/><circle cx="11" cy="11" r="5" fill="#3f7ee8" stroke="#fff" stroke-width="1.200"/><circle cx="17" cy="17" r="7" fill="#d8203a"/><path d="M12 22c0-3 2-4 5-4s5 1 5 4z" fill="#eee"/><circle cx="17" cy="15" r="3" fill="#e8b898"/><path d="M13.500 15c0-5 7-5 7 0l-2-2h-3z" fill="#111"/></symbol>
        <symbol id="t-word" viewBox="0 0 24 24"><path d="M6 2h18v20H6z" fill="#2b7cd3"/><path d="M6 2h18v5H6z" fill="#41a5ee"/><path d="M6 12h18v5H6z" fill="#185abd"/><path d="M6 17h18v5H6z" fill="#103f91"/><path d="M0 6h13v12H0z" fill="#185abd"/><text x="1.500" y="15.500" class="word" fill="#fff">W</text></symbol>
        <symbol id="t-cam" viewBox="0 0 24 24"><path d="M1 4h6l9 16h-5z" fill="#ddd"/><path d="M14 3h4L5 22H0z" fill="#999"/><circle cx="18" cy="6" r="5" fill="none" stroke="#b01c34" stroke-width="2.500"/><path d="M15 6h6" stroke="#b01c34" stroke-width="2"/></symbol>
        <symbol id="t-snip" viewBox="0 0 24 24"><circle cx="13" cy="9" r="7.500" fill="none" stroke="#e2461c" stroke-width="3.500"/><path d="M10 1l4 16M15 4l-5 14" stroke="#ddd" stroke-width="2.500"/><circle cx="6" cy="18" r="3" fill="none" stroke="#1d86dc" stroke-width="2.500"/><circle cx="14" cy="21" r="3" fill="none" stroke="#1d86dc" stroke-width="2.500"/></symbol>
        <symbol id="t-help" viewBox="0 0 24 24"><circle cx="11" cy="11" r="9.500" fill="#1a9be0" stroke="#fff" stroke-width="2"/><text x="6.500" y="17" class="big" fill="#fff">?</text><circle cx="18.500" cy="17.500" r="5" fill="#f6a623"/><path d="M18.500 16.500v4M18.500 14v1.500" stroke="#fff" stroke-width="1.500"/></symbol>
        <symbol id="moon" viewBox="0 0 24 24"><path d="M15 2c12 2 10 20-2 20-6 0-9-3-10-7 8 4 15-3 12-13z" fill="#fdb515"/><path d="M3 9c-4 0-4-5 0-5 1-5 8-4 8-1 4 0 4 6 0 6z" fill="#cfd8f0"/></symbol>
        <symbol id="up" viewBox="0 0 12 8"><path d="M1 7l5-5 5 5" fill="none" stroke="#fff" stroke-width="1.300"/></symbol>
        <symbol id="battery" viewBox="0 0 16 12"><path d="M6 2.500h8.500v8H6M4 7v3.500h3M14.500 5H16v3h-1.500M1 1v3h5V1M2 0v2M5 0v2M3.500 4v5" fill="none" stroke="#fff"/><path d="M8 4.500h2v4H8z" fill="#fff"/></symbol>
        <symbol id="sound" viewBox="0 0 16 14"><path d="M.5 5h2.500l3-3v10L3 9H.5zM8 5c1 1 1 3 0 4M10 3.500c2 2 2 5 0 7M12.500 1.500c3 3 3 8 0 11" fill="none" stroke="#fff"/></symbol>
        <symbol id="notify" viewBox="0 0 26 26"><path d="M1 1h16v12H7v4l-4-4H1z" fill="#fff"/><path d="M3 4h12M3 7h12M3 10h8" stroke="#333"/><circle cx="17" cy="17" r="7.500" fill="#333" stroke="#777"/><text x="14" y="21" class="count" fill="#fff">1</text></symbol>
    </svg>

    <header class="titlebar">
        <svg class="icon"><use href="#app"/></svg>
        <h1>Mastercam Design X5</h1>
        <span class="top-tab"></span>
        <div class="window-buttons">
            <button aria-label="Minimize"><svg viewBox="0 0 10 10"><path d="M0 5.500h10"/></svg></button>
            <button aria-label="Restore"><svg viewBox="0 0 10 10"><path d="M.5 2.500h7v7h-7zM2.500 2.500v-2h7v7h-2"/></svg></button>
            <button aria-label="Close"><svg viewBox="0 0 10 10"><path d="M0 0l10 10M10 0L0 10"/></svg></button>
        </div>
    </header>

    <nav class="menu">
        <a href="#"><u>F</u>ile</a>
        <a href="#"><u>E</u>dit</a>
        <a href="#"><u>V</u>iew</a>
        <a href="#"><u>A</u>nalyze</a>
        <a href="#"><u>C</u>reate</a>
        <a href="#"><u>S</u>olids</a>
        <a href="#"><u>X</u>form</a>
        <a href="#"><u>M</u>achine Type</a>
        <a href="#"><u>T</u>oolpaths</a>
        <a href="#">Sc<u>r</u>een</a>
        <a href="#">Settin<u>g</u>s</a>
        <a href="#"><u>H</u>elp</a>
    </nav>

    <div class="toolbars">
        <div class="tool-row">
            <div class="group">
                <button class="tool" aria-label="New"><svg class="icon"><use href="#new"/></svg></button>
                <button class="tool" aria-label="Open"><svg class="icon"><use href="#open"/></svg></button>
                <button class="tool" aria-label="Save"><svg class="icon"><use href="#save"/></svg></button>
                <button class="tool" aria-label="Print"><svg class="icon"><use href="#print"/></svg></button>
                <button class="tool" aria-label="Print preview"><svg class="icon"><use href="#preview"/></svg></button>
                <button class="tool" aria-label="Convert"><svg class="icon"><use href="#cup"/></svg></button>
            </div>
            <div class="group">
                <button class="tool" aria-label="Undo"><svg class="icon"><use href="#undo"/></svg></button>
                <button class="tool" aria-label="Redo"><svg class="icon"><use href="#redo"/></svg></button>
            </div>
            <div class="group">
                <button class="tool" aria-label="Pan"><svg class="icon"><use href="#pan"/></svg></button>
                <button class="tool" aria-label="Repaint"><svg class="icon"><use href="#repaint"/></svg></button>
                <span class="sep"></span>
                <button class="tool" aria-label="Zoom target"><svg class="icon"><use href="#zoom-in"/></svg></button>
                <button class="tool" aria-label="Zoom window"><svg class="icon"><use href="#zoom-win"/></svg></button>
                <button class="tool" aria-label="Fit"><svg class="icon"><use href="#zoom-eq"/></svg></button>
                <span class="sep"></span>
                <button class="tool" aria-label="Zoom selected"><svg class="icon"><use href="#zoom-sel"/></svg></button>
                <button class="tool" aria-label="Zoom out"><svg class="icon"><use href="#zoom-out"/></svg></button>
                <span class="sep"></span>
                <button class="tool" aria-label="Spin"><svg class="icon"><use href="#spin"/></svg></button>
                <button class="tool" aria-label="Rotate view"><svg class="icon"><use href="#spin2"/></svg></button>
                <button class="tool" aria-label="Named view"><svg class="icon"><use href="#spin3"/></svg></button>
            </div>
            <div class="group">
                <button class="tool" aria-label="Top view"><svg class="icon"><use href="#cube-top"/></svg></button>
                <button class="tool" aria-label="Front view"><svg class="icon"><use href="#cube-front"/></svg></button>
                <button class="tool" aria-label="Right view"><svg class="icon"><use href="#cube-side"/></svg></button>
                <button class="tool" aria-label="Isometric view"><svg class="icon"><use href="#wirecube"/></svg></button>
            </div>
            <div class="group">
                <button class="tool" aria-label="Cplane"><svg class="icon"><use href="#cplane"/></svg></button>
                <button class="drop" aria-label="Cplane options"></button>
            </div>
            <div class="group">
                <button class="tool" aria-label="Wireframe"><svg class="icon"><use href="#globe"/></svg></button>
                <button class="drop" aria-label="Wireframe options"></button>
                <button class="tool" aria-label="Shaded"><svg class="icon"><use href="#sphere"/></svg></button>
                <button class="drop" aria-label="Shading options"></button>
                <button class="tool" aria-label="Translucent"><svg class="icon"><use href="#redsolid"/></svg></button>
                <button class="tool" aria-label="Outline"><svg class="icon"><use href="#redwire"/></svg></button>
            </div>
            <div class="group">
                <button class="tool" aria-label="Delete entities"><svg class="icon"><use href="#pencil"/></svg></button>
                <button class="tool" aria-label="Delete duplicates"><svg class="icon"><use href="#pencils"/></svg></button>
                <button class="drop" aria-label="Delete options"></button>
                <span class="sep"></span>
                <button class="tool" aria-label="Undelete"><svg class="icon"><use href="#undelete"/></svg></button>
                <button class="drop off" aria-label="Undelete options"></button>
            </div>
            <div class="group">
                <button class="tool" aria-label="Analyze"><svg class="icon"><use href="#ask-line"/></svg></button>
                <button class="tool" aria-label="Change attributes"><svg class="icon"><use href="#chain"/></svg></button>
                <span class="sep"></span>
                <button class="tool" aria-label="Hide entities"><svg class="icon"><use href="#mate"/></svg></button>
                <button class="tool" aria-label="Blank"><svg class="icon"><use href="#repaint2"/></svg></button>
                <button class="tool" aria-label="Statistics"><svg class="icon"><use href="#sigma"/></svg></button>
                <button class="tool" aria-label="Run add-in"><svg class="icon"><use href="#ram"/></svg></button>
                <button class="drop" aria-label="Add-in options"></button>
            </div>
        </div>

        <div class="tool-row">
            <div class="group">
                <button class="tool" aria-label="Points"><svg class="icon"><use href="#spline-pts"/></svg></button><button class="drop" aria-label="Point options"></button>
                <button class="tool" aria-label="Line"><svg class="icon"><use href="#line"/></svg></button><button class="drop" aria-label="Line options"></button>
                <button class="tool" aria-label="Circle"><svg class="icon"><use href="#circle"/></svg></button><button class="drop" aria-label="Circle options"></button>
                <button class="tool" aria-label="Polygon"><svg class="icon"><use href="#pent"/></svg></button><button class="drop" aria-label="Polygon options"></button>
                <button class="tool" aria-label="Fillet"><svg class="icon"><use href="#fillet"/></svg></button><button class="drop" aria-label="Fillet options"></button>
                <button class="tool" aria-label="Spline"><svg class="icon"><use href="#spline"/></svg></button><button class="drop" aria-label="Spline options"></button>
                <button class="tool" aria-label="Cylinder"><svg class="icon"><use href="#cyl"/></svg></button><button class="drop" aria-label="Primitive options"></button>
            </div>
            <div class="group">
                <button class="tool" aria-label="Trim"><svg class="icon"><use href="#trim"/></svg></button>
                <button class="tool" aria-label="Break"><svg class="icon"><use href="#break"/></svg></button>
                <button class="drop" aria-label="Break options"></button>
            </div>
            <div class="group">
                <button class="tool" aria-label="Dynamic xform"><svg class="icon"><use href="#dyn"/></svg></button>
                <button class="tool" aria-label="Translate"><svg class="icon"><use href="#squares"/></svg></button>
                <button class="tool" aria-label="Rotate"><svg class="icon"><use href="#rotate"/></svg></button>
                <button class="tool" aria-label="Mirror"><svg class="icon"><use href="#mirror"/></svg></button>
                <button class="tool" aria-label="Scale"><svg class="icon"><use href="#scale"/></svg></button>
                <button class="tool" aria-label="Offset"><svg class="icon"><use href="#offset"/></svg></button>
                <button class="tool" aria-label="Project"><svg class="icon"><use href="#project"/></svg></button>
                <span class="sep"></span>
                <button class="tool" aria-label="Roll"><svg class="icon"><use href="#roll"/></svg></button><button class="drop" aria-label="Roll options"></button>
                <button class="tool" aria-label="Rectangular array"><svg class="icon"><use href="#array"/></svg></button>
                <button class="tool" aria-label="Stretch"><svg class="icon"><use href="#drag"/></svg></button><button class="drop" aria-label="Stretch options"></button>
            </div>
            <div class="group">
                <button class="tool" aria-label="Smart dimension"><svg class="icon"><use href="#bulb"/></svg></button><button class="drop" aria-label="Dimension options"></button>
                <button class="tool" aria-label="Note"><svg class="icon"><use href="#notes"/></svg></button>
            </div>
            <div class="group">
                <button class="tool" aria-label="Net surface"><svg class="icon"><use href="#net"/></svg></button>
                <button class="tool" aria-label="Ruled surface"><svg class="icon"><use href="#ruled"/></svg></button>
                <button class="tool" aria-label="Revolved surface"><svg class="icon"><use href="#revolve"/></svg></button>
                <button class="tool" aria-label="Swept surface"><svg class="icon"><use href="#sweep"/></svg></button>
                <button class="tool" aria-label="Draft surface"><svg class="icon"><use href="#draft"/></svg></button><button class="drop" aria-label="Surface options"></button>
                <span class="sep"></span>
                <button class="tool" aria-label="Trim surfaces"><svg class="icon"><use href="#surf1"/></svg></button>
                <button class="tool" aria-label="Split surface"><svg class="icon"><use href="#surf2"/></svg></button>
                <button class="tool" aria-label="Bounding box"><svg class="icon"><use href="#box"/></svg></button>
                <span class="sep"></span>
                <button class="tool" aria-label="Fill holes"><svg class="icon"><use href="#surf3"/></svg></button><button class="drop" aria-label="Hole options"></button>
                <button class="tool" aria-label="Blend surfaces"><svg class="icon"><use href="#surf4"/></svg></button><button class="drop" aria-label="Blend options"></button>
                <button class="tool" aria-label="Drill"><svg class="icon"><use href="#tool"/></svg></button><button class="drop" aria-label="Drill options"></button>
            </div>
        </div>

        <div class="tool-row input-row">
            <div class="coords">
                <button class="key"><u>X</u></button>
                <span class="combo"><select aria-label="X"><option>79.83988</option></select></span>
                <button class="key"><u>Y</u></button>
                <span class="combo"><select aria-label="Y"><option>18.13428</option></select></span>
                <button class="key"><u>Z</u></button>
                <span class="combo"><select aria-label="Z"><option>0.0</option></select></span>
                <div class="keys">
                    <button class="key" aria-label="Fast point"><svg class="wide"><use href="#plusbolt"/></svg></button>
                    <button class="key" aria-label="Configure"><svg class="large"><use href="#bang"/></svg></button>
                    <button class="key" aria-label="Autocursor"><svg class="large"><use href="#redx"/></svg></button>
                    <button class="key slim" aria-label="Autocursor override"></button>
                    <button class="key" aria-label="Help"><svg class="large"><use href="#help"/></svg></button>
                </div>
            </div>
            <div class="selection">
                <span class="grip"></span>
                <button class="key text" disabled>All...</button>
                <button class="key text">Only...</button>
                <button class="key" aria-label="Select"><svg class="large"><use href="#cursor"/></svg></button>
                <span class="combo off"><select aria-label="Window mode"><option>In</option></select></span>
                <button class="key flat" aria-label="Window select"><svg class="icon"><use href="#dashsel"/></svg></button>
                <button class="drop off" aria-label="Select method"></button>
                <button class="key flat" aria-label="Standard selection"><svg class="large"><use href="#cursor-off"/></svg></button>
                <button class="key flat last" aria-label="Solid selection"><svg class="icon"><use href="#blob"/></svg></button>
                <button class="key flat" aria-label="Select edges"><svg class="icon"><use href="#hex"/></svg></button>
                <button class="key flat" aria-label="Select faces"><svg class="icon"><use href="#hex"/></svg></button>
                <button class="key flat last" aria-label="Select body"><svg class="icon"><use href="#hex"/></svg></button>
                <button class="key flat" aria-label="Select back"><svg class="icon"><use href="#halfcube"/></svg></button>
                <button class="key flat last" aria-label="Select last"><svg class="icon"><use href="#bend"/></svg></button>
                <button class="key flat last" aria-label="Validate"><svg class="icon"><use href="#vcheck"/></svg></button>
                <button class="key flat" aria-label="Unselect all"><svg class="icon"><use href="#no"/></svg></button>
                <button class="key flat last" aria-label="End selection"><svg class="large"><use href="#disc"/></svg></button>
                <button class="key flat" aria-label="Selection help"><svg class="large"><use href="#help-off"/></svg></button>
            </div>
        </div>
    </div>

    <div class="ribbon">Ribbon Bar</div>

    <main>
        <aside class="solids">
            <div class="side-tools">
                <span class="dots"></span>
                <div><button class="tool" aria-label="Extrude"><svg class="icon"><use href="#extrude"/></svg></button></div>
                <div><button class="tool" aria-label="Revolve"><svg class="icon"><use href="#s-revolve"/></svg></button></div>
                <div><button class="tool" aria-label="Sweep"><svg class="icon"><use href="#s-sweep"/></svg></button></div>
                <div><button class="tool" aria-label="Loft"><svg class="icon"><use href="#s-loft"/></svg></button></div>
                <div><button class="tool" aria-label="Solid fillet"><svg class="icon"><use href="#s-fillet"/></svg></button><button class="drop" aria-label="Fillet types"></button></div>
                <hr>
                <div><button class="tool" aria-label="Shell"><svg class="icon"><use href="#s-shell"/></svg></button></div>
                <div><button class="tool" aria-label="Boolean"><svg class="icon"><use href="#s-bool"/></svg></button><button class="drop" aria-label="Boolean types"></button></div>
                <div><button class="tool" aria-label="Draft faces"><svg class="icon"><use href="#s-draft"/></svg></button></div>
                <div><button class="tool" aria-label="Thicken"><svg class="icon"><use href="#s-thick"/></svg></button></div>
                <div><button class="tool" aria-label="Block"><svg class="icon"><use href="#s-block"/></svg></button><span class="sep"></span></div>
                <hr>
                <div><button class="tool" aria-label="Remove history"><svg class="icon"><use href="#s-history"/></svg></button></div>
                <div><button class="tool" aria-label="Solid from surfaces"><svg class="icon"><use href="#s-grid"/></svg></button></div>
                <div><button class="tool" aria-label="Trim solid"><svg class="icon"><use href="#s-sheet"/></svg></button></div>
                <div><button class="tool" aria-label="Layout"><svg class="icon"><use href="#s-layout"/></svg></button><span class="sep"></span></div>
                <hr>
                <div><button class="tool" aria-label="Find features"><svg class="icon"><use href="#s-find"/></svg></button><button class="drop" aria-label="Feature types"></button></div>
                <div><button class="tool" aria-label="Remove faces"><svg class="icon"><use href="#s-red"/></svg></button><button class="drop" aria-label="Face types"></button></div>
            </div>
        </aside>

        <section class="manager">
            <div class="manager-head">
                <button class="drop" aria-label="Panel menu"></button>
                <button aria-label="Close panel"><svg viewBox="0 0 10 10"><path d="M1 0l8 10M9 0L1 10"/></svg></button>
            </div>
            <div class="manager-tools">
                <svg class="icon"><use href="#undelete"/></svg>
                <span class="sep"></span>
                <svg class="icon"><use href="#help-off"/></svg>
                <span class="sep"></span>
            </div>
            <div class="manager-sub"><span class="stub"></span></div>
            <div class="tree"></div>
        </section>

        <section class="canvas">
            <svg class="drawing" viewBox="335 167 1000 534">
                <g class="axes">
                    <path d="M335 408.500h454M789.500 408v293"/>
                    <path class="thick" d="M789 167v241"/>
                    <path class="thick right" d="M789 408h546"/>
                </g>
                <path class="part" d="M517.500 238.500H1061.500A67 68 0 0 1 1128.500 306.500V577.500H517.500A68 67 0 0 0 449.500 510.500V306.500L517.500 238.500M789.500 324.500L869.500 382.500 838.500 476.500H740.500L709.500 382.500z"/>
                <path class="part" d="M1061 306.500h1M449 577.500h1"/>
                <g class="holes">
                    <circle cx="789.500" cy="299.500" r="17"/>
                    <circle cx="686" cy="374.500" r="17"/>
                    <circle cx="893" cy="374.500" r="17"/>
                    <circle cx="726" cy="496" r="17"/>
                    <circle cx="853.500" cy="496" r="17"/>
                    <path d="M789 299.500h1M686 374.500h1M892 374.500h1M725 495.500h1M853 495.500h1"/>
                </g>
                <path class="rubber" d="M517.500 231v353M511 238.500h15M511 577.500h7"/>
                <path class="gnomon-y" d="M376.500 642v19"/>
                <path class="gnomon-x" d="M377 661.500h19"/>
                <text class="gnomon" x="373" y="636" fill="#0f8">Y</text>
                <text class="gnomon" x="402" y="665" fill="#ff1040">X</text>
            </svg>
            <div class="hint">Select a point or curve</div>
            <div class="planes"><span>Gview:TOP</span><span>WCS:TOP</span><span>Cplane:TOP</span></div>
            <div class="watermark"><p>Activate Windows</p><p>Go to Settings to activate Windows.</p></div>
            <div class="scalebar"><b>14.140</b><i></i><span>Metric</span></div>
        </section>

        <aside class="recent">
            <div class="recent-tools">
                <span class="dots"></span>
                <button class="tool" aria-label="Analyze distance"><svg class="icon"><use href="#ask-arrow"/></svg></button>
                <button class="tool" aria-label="Polygon"><svg class="icon"><use href="#pent"/></svg></button>
                <button class="tool" aria-label="Undo last"><svg class="icon"><use href="#undo"/></svg></button>
                <button class="tool" aria-label="Fillet entities"><svg class="icon"><use href="#fillet"/></svg></button>
                <button class="tool active" aria-label="Rotate entities"><svg class="icon"><use href="#rotate"/></svg></button>
                <button class="tool" aria-label="Mirror entities"><svg class="icon"><use href="#mirror"/></svg></button>
                <button class="tool" aria-label="Array"><svg class="icon"><use href="#array"/></svg></button>
                <button class="tool" aria-label="Dynamic"><svg class="icon"><use href="#dyn"/></svg></button>
                <button class="tool" aria-label="Circle center point"><svg class="icon"><use href="#circle"/></svg></button>
                <button class="tool" aria-label="Trim entities"><svg class="icon"><use href="#trim"/></svg></button>
            </div>
            <div class="recent-tools">
                <span class="dots"></span>
                <button class="tool" aria-label="Only surfaces"><svg class="icon"><use href="#b-surf"/></svg></button>
                <button class="tool" aria-label="Only points"><svg class="icon"><use href="#b-plus"/></svg></button>
                <button class="tool" aria-label="Only lines"><svg class="icon"><use href="#b-line"/></svg></button>
                <button class="tool" aria-label="Only arcs"><svg class="icon"><use href="#b-circ"/></svg></button>
                <button class="tool" aria-label="Only splines"><svg class="icon"><use href="#b-spl"/></svg></button>
                <button class="tool" aria-label="Only nets"><svg class="icon"><use href="#b-net"/></svg></button>
                <button class="tool" aria-label="Only solids"><svg class="icon"><use href="#b-cube"/></svg></button>
                <button class="tool" aria-label="Only wireframe"><svg class="icon"><use href="#b-globe"/></svg></button>
                <button class="tool" aria-label="None"><svg class="icon"><use href="#no"/></svg></button>
                <hr>
                <button class="tool" aria-label="Group"><svg class="icon"><use href="#b-lvl1"/></svg></button>
                <button class="tool" aria-label="Result"><svg class="icon"><use href="#b-lvl2"/></svg></button>
                <hr>
                <button class="tool" aria-label="By color"><svg class="icon"><use href="#b-color"/></svg></button>
                <button class="tool" aria-label="By level"><svg class="icon"><use href="#b-color"/></svg></button>
            </div>
        </aside>

        <form class="dialog">
            <div class="dialog-title">
                <button type="button" aria-label="Close dialog"><svg viewBox="0 0 10 10"><path d="M0 0l10 10M10 0L0 10"/></svg></button>
                <svg class="scribble" viewBox="0 0 112 26"><path d="M12 1h34l18 1h36c16 0 16 23 0 23H64C50 25 40 25 12 24 -4 23-4 2 12 1z"/></svg>
            </div>
            <svg class="endpoints" viewBox="0 0 68 12">
                <path d="M12 6h44" stroke="#66a" stroke-width="4"/>
                <path d="M4 1h3v3h3v3H7v3H4V7H1V4h3z" fill="#1eb41e" stroke="#153"/>
                <path d="M61 1h3v3h3v3h-3v3h-3V7h-3V4h3z" fill="#ff4a20" stroke="#821"/>
            </svg>
            <div class="points">
                <input type="text" id="x1" value="-40.0" aria-label="X start"><label for="x2">X</label><input type="text" id="x2" value="-40.0">
                <input type="text" id="y1" value="25.0" aria-label="Y start"><label for="y2">Y</label><input type="text" id="y2" value="-25.0">
                <input type="text" id="z1" value="0.0" aria-label="Z start"><label for="z2">Z</label><input type="text" id="z2" value="0.0">
            </div>
            <div class="angle">
                <svg><use href="#angle"/></svg>
                <input type="text" value="270.0" aria-label="Angle">
            </div>
            <div class="units">
                <label for="units">Units</label>
                <span class="picker"><select id="units"><option>Millimeters</option></select></span>
                <label for="precision">Precision</label>
                <span class="picker short"><select id="precision"><option>N.123</option></select></span>
                <div class="length"><label for="len3">3D</label><svg><use href="#ruler"/></svg><input type="text" id="len3" value="50.000"></div>
                <div class="length"><label for="len2">2D</label><svg><use href="#ruler"/></svg><input type="text" id="len2" value="50.000"></div>
            </div>
            <div class="deltas">
                <label><span><b>Δ</b>X</span><input type="text" value="0.000"></label>
                <label><span><b>Δ</b>Y</span><input type="text" value="-50.000"></label>
                <label><span><b>Δ</b>Z</span><input type="text" value="0.000"></label>
            </div>
            <div class="actions">
                <button type="button" class="ok" aria-label="OK"><svg><use href="#tick"/></svg></button>
                <button type="button" aria-label="Help"><svg><use href="#help"/></svg></button>
            </div>
        </form>
    </main>

    <div class="status">
        <span class="prompt">Rotate</span>
        <button class="w23">3D</button>
        <button class="w46">Gview</button>
        <button class="w37">Planes</button>
        <div class="pair"><label for="depth">Z</label><input type="text" id="depth" value="0.0"><span class="chev"></span></div>
        <div class="pair"><button class="color">10</button><button class="black-drop" aria-label="Color"></button></div>
        <div class="pair level"><label for="level">Level</label><span class="list"><select id="level"><option>1</option></select></span></div>
        <button class="attr">Attributes</button>
        <span class="list style"><select aria-label="Point style"><option></option></select><svg viewBox="0 0 10 10"><path d="M0 5h10M5 0v10M2 8l6-6"/></svg></span>
        <span class="list width"><select aria-label="Line width"><option></option></select><i class="stroke bold"></i></span>
        <span class="list width"><select aria-label="Line style"><option></option></select><i class="stroke"></i></span>
        <button class="w37">WCS</button>
        <button class="w52">Groups</button>
        <button class="w12">!</button>
        <button class="w12">?</button>
    </div>

    <footer class="taskbar">
        <button class="start" aria-label="Start"><svg class="icon"><use href="#win"/></svg></button>
        <label class="search"><svg class="icon"><use href="#search"/></svg><input type="text" placeholder="Search" aria-label="Search"></label>
        <button class="pin" aria-label="Cortana"><svg class="icon"><use href="#cortana"/></svg></button>
        <button class="pin" aria-label="Task view"><svg class="icon"><use href="#taskview"/></svg></button>
        <span class="bars"></span>
        <button class="pin" aria-label="Edge"><svg><use href="#t-edge"/></svg></button>
        <button class="pin open" aria-label="File Explorer"><svg><use href="#t-folder"/></svg></button>
        <button class="pin open" aria-label="Chrome"><svg><use href="#t-chrome"/></svg></button>
        <button class="pin open" aria-label="Word"><svg><use href="#t-word"/></svg></button>
        <button class="pin open current" aria-label="Mastercam"><svg><use href="#t-cam"/></svg></button>
        <button class="pin open" aria-label="Snipping Tool"><svg><use href="#t-snip"/></svg></button>
        <div class="tray">
            <svg class="assist"><use href="#t-help"/></svg>
            <svg><use href="#moon"/></svg>
            <span class="weather"><span>23°C</span><span>Cerah</span></span>
            <svg class="up"><use href="#up"/></svg>
            <svg class="small"><use href="#battery"/></svg>
            <svg class="small"><use href="#sound"/></svg>
            <span class="lang">ENG</span>
            <span class="clock">10:54 PM<br>9/26/2022</span>
            <svg class="notify"><use href="#notify"/></svg>
            <i class="peek"></i>
        </div>
    </footer>
</body>
</html>
```
FILE: styles.css
```css
* {
    box-sizing: border-box;
}

body {
    margin: 0;
    display: flex;
    flex-direction: column;
    height: 100vh;
    overflow: hidden;
    background-color: #fff;
    color: #000;
    font-family: "Liberation Sans", Arial, sans-serif;
    font-size: 11px;
}

button, input, select {
    font: inherit;
    color: inherit;
    margin: 0;
    padding: 0;
    border: none;
    border-radius: 0;
    background: none;
}

select {
    appearance: none;
}

.sprite {
    position: absolute;
    width: 0;
    height: 0;
    visibility: hidden;
}

.glyph {
    font: bold 14px "Liberation Sans", sans-serif;
}

.word {
    font: bold 10px "Liberation Sans", sans-serif;
}

.big {
    font: bold 16px "Liberation Sans", sans-serif;
}

.count {
    font: 11px "Open Sans", sans-serif;
}

.icon {
    width: 16px;
    height: 16px;
    flex: none;
}

.large {
    width: 20px;
    height: 20px;
    flex: none;
}

.wide {
    width: 21px;
    height: 16px;
    flex: none;
}

/* title and menu */
.titlebar {
    position: relative;
    display: flex;
    align-items: center;
    gap: 5px;
    height: 23px;
    padding-left: 2px;
    flex: none;
}

.titlebar h1 {
    margin: 0;
    font: 12px "Open Sans", sans-serif;
    color: #888;
}

.top-tab {
    position: absolute;
    top: 0;
    left: 563px;
    width: 240px;
    height: 1px;
    background: linear-gradient(90deg, #5068c8 48px, #e0e0e0 48px);
}

.window-buttons {
    display: flex;
    margin-left: auto;
    padding-right: 2px;
}

.window-buttons button {
    width: 46px;
    height: 20px;
}

.window-buttons svg {
    width: 10px;
    height: 10px;
    fill: none;
    stroke: #777;
}

.menu {
    display: flex;
    gap: 14px;
    height: 20px;
    padding-left: 7px;
    flex: none;
    font: 12px/20px Roboto, sans-serif;
}

.menu a {
    color: #555;
    text-decoration: none;
}

/* toolbars */
.toolbars {
    border-top: 1px solid #a0a0a0;
    border-bottom: 1px solid #a0a0a0;
    flex: none;
}

.tool-row {
    display: flex;
    height: 30px;
}

.group {
    display: flex;
    align-items: center;
    padding: 3px 3px 3px 11px;
    border-right: 1px solid #a0a0a0;
    border-bottom: 1px solid #a0a0a0;
    background: #f0f0f0 content-box;
}

.tool {
    display: flex;
    align-items: center;
    justify-content: center;
    width: 23px;
    height: 22px;
    flex: none;
}

.drop {
    display: flex;
    align-items: center;
    justify-content: center;
    width: 15px;
    height: 22px;
    flex: none;
}

.drop::before, .slim::before {
    content: "";
    border: 4px solid transparent;
    border-top-color: #222;
    border-bottom: none;
}

.drop.off::before {
    border-top-color: #888;
}

.sep {
    width: 8px;
    height: 18px;
    flex: none;
    background: linear-gradient(#999, #999) 3px 0 / 1px 100% no-repeat;
}

.coords, .selection {
    display: flex;
    align-items: center;
    background-color: #ffffc8;
    border-right: 1px solid #a0a0a0;
}

.coords {
    padding: 0 8px 0 6px;
    gap: 5px;
}

.coords .combo {
    margin-right: 8px;
}

.coords .combo:nth-last-child(2) {
    margin-right: 2px;
}

.keys {
    display: flex;
    gap: 3px;
}

.selection {
    padding: 0 9px 0 4px;
    gap: 3px;
}

.selection .drop {
    width: 13px;
}

.selection .drop::before {
    border-width: 3px;
    border-bottom: none;
}

.grip {
    width: 1px;
    height: 22px;
    margin-right: 5px;
    background-color: #999;
}

.key {
    display: flex;
    align-items: center;
    justify-content: center;
    width: 21px;
    height: 21px;
    flex: none;
    background-color: #e1e1e1;
    border: 1px solid #adadad;
    font-size: 12px;
}

.slim {
    width: 12px;
}

.slim::before {
    border-width: 3px;
    border-bottom: none;
}

.key.text {
    width: 45px;
    margin-right: 7px;
    font-size: 11px;
}

.key.text:disabled {
    background-color: #ccc;
    color: #888;
}

.key.flat {
    background-color: #f0f0f0;
    border-color: #f8f8f8 #c0c0c0 #c0c0c0 #f8f8f8;
}

.key.last {
    margin-right: 6px;
}

.combo {
    position: relative;
    display: flex;
}

.combo select {
    width: 72px;
    height: 21px;
    padding-left: 2px;
    border: 1px solid #7a7a7a;
    background: linear-gradient(#ffff80, #ffff80) 2px 3px / 48px 13px no-repeat #fff;
}

.combo.off {
    margin: 0 6px 0 5px;
}

.combo.off select {
    background: linear-gradient(#fff, #fff) 2px 3px / 48px 13px no-repeat #ccc;
    border-color: #bbb;
}

.combo.off::after {
    border-color: #999;
}

.combo::after, .picker::after, .list::after, .chev {
    content: "";
    position: absolute;
    right: 7px;
    top: 6px;
    width: 6px;
    height: 6px;
    border-right: 1px solid #555;
    border-bottom: 1px solid #555;
    transform: rotate(45deg);
    pointer-events: none;
}

.ribbon {
    height: 31px;
    padding-left: 187px;
    flex: none;
    background-color: #f0f0f0;
    border-bottom: 1px solid #888;
    line-height: 32px;
}

/* work area */
main {
    position: relative;
    display: flex;
    flex: 1;
    min-height: 0;
    border-bottom: 1px solid #fff;
}

.solids {
    width: 45px;
    flex: none;
    border-right: 1px solid #ccc;
}

.side-tools {
    padding: 3px 4px 3px 2px;
    background-color: #f0f0f0;
    border-bottom: 1px solid #a0a0a0;
}

.side-tools div {
    display: flex;
    align-items: center;
}

.dots {
    display: block;
    height: 10px;
    margin: 0 2px;
    background: linear-gradient(90deg, #b0b0b0 2px, transparent 2px) 0 2px / 4px 2px repeat-x;
}

hr {
    height: 1px;
    margin: 3px 0 4px 2px;
    border: none;
    background-color: #a0a0a0;
}

.manager {
    display: flex;
    flex-direction: column;
    width: 290px;
    padding: 0 4px 5px;
    flex: none;
    background-color: #f0f0f0;
    border-right: 2px solid #888;
}

.manager-head {
    display: flex;
    justify-content: flex-end;
    gap: 6px;
    height: 21px;
    padding-top: 2px;
    background: linear-gradient(#b4b4b4, #b4b4b4) 0 1px / 100% 17px no-repeat;
}

.manager-head button {
    display: flex;
    align-items: center;
    justify-content: center;
    width: 20px;
    height: 20px;
    background-color: #f0f0f0;
    border: 1px solid #a0a0a0;
}

.manager-head svg {
    width: 9px;
    height: 9px;
    stroke: #222;
}

.manager-tools {
    display: flex;
    align-items: center;
    justify-content: flex-end;
    gap: 4px;
    height: 33px;
    margin-top: 20px;
    padding-right: 20px;
    border-top: 1px solid #a0a0a0;
    border-bottom: 1px solid #a0a0a0;
}

.manager-sub {
    display: flex;
    justify-content: flex-end;
    height: 36px;
    padding: 12px 61px 0 0;
}

.stub {
    width: 10px;
    height: 12px;
    border: 1px solid #999;
}

.tree {
    flex: 1;
    background-color: #fff;
    border: 1px solid #828790;
}

.canvas {
    position: relative;
    flex: 1;
    min-width: 0;
    background-color: #000099;
    border-top: 1px solid #667;
    overflow: hidden;
}

.drawing {
    display: block;
    width: 100%;
    height: 100%;
    fill: none;
    shape-rendering: crispEdges;
}

.axes {
    stroke: #8a3a44;
}

.axes .thick {
    stroke: #7a4410;
    stroke-width: 2;
}

.axes .right {
    stroke: #854050;
}

.part {
    stroke: #00ff80;
}

.holes {
    stroke: #ff30ff;
}

.rubber {
    stroke: #fff;
}

.gnomon-y {
    stroke: #00ff80;
}

.gnomon-x {
    stroke: #ff1060;
}

.gnomon {
    font: bold 12px "Liberation Mono", monospace;
}

.hint {
    position: absolute;
    left: 21px;
    top: 21px;
    padding: 0 4px;
    background-color: #ffffe1;
    border: 1px solid #555;
    line-height: 15px;
}

.planes {
    position: absolute;
    left: 7px;
    bottom: 8px;
    display: flex;
    gap: 13px;
    color: #ccc;
    font: bold 11px/15px "Open Sans", sans-serif;
}

.watermark {
    position: absolute;
    right: 29px;
    bottom: 6px;
    color: #7a7fb4;
    font-family: "Open Sans", sans-serif;
}

.watermark p {
    margin: 0;
    font-size: 14px;
    line-height: 20px;
}

.watermark p:first-child {
    font-size: 19px;
    line-height: 25px;
}

.scalebar {
    position: absolute;
    right: 23px;
    bottom: 9px;
    width: 97px;
    font-size: 12px;
    font-weight: bold;
    line-height: 13px;
    text-align: center;
    color: #ccc;
    border: solid #ffff60;
    border-width: 0 1px;
}

.scalebar b, .scalebar span {
    display: block;
    padding-right: 12px;
}

.scalebar b {
    line-height: 11px;
    color: #00ff00;
}

.scalebar i {
    display: block;
    height: 1px;
    background-color: #ffff60;
}

.recent {
    width: 31px;
    padding-left: 2px;
    flex: none;
    overflow: hidden;
    background-color: #f8f8f8;
    border-left: 1px solid #fff;
}

.recent-tools {
    padding: 2px 2px 3px;
    background-color: #f0f0f0;
    border-bottom: 1px solid #a0a0a0;
}

.recent-tools hr {
    margin: 2px 0 4px 2px;
}

.recent-tools .active {
    background-color: #cce0f6;
    border: 1px solid #b8d4f0;
}

/* dialog */
.dialog {
    position: absolute;
    left: 46px;
    top: -1px;
    width: 217px;
    padding-bottom: 13px;
    background-color: #f0f0f0;
    border: 1px solid #666;
    box-shadow: 4px 6px 14px rgba(0, 0, 0, 0.35);
}

.dialog-title {
    position: relative;
    display: flex;
    align-items: center;
    justify-content: flex-end;
    height: 25px;
    padding-right: 10px;
    background-color: #fff;
}

.dialog-title button {
    width: 11px;
    height: 21px;
}

.dialog-title button svg {
    width: 11px;
    height: 11px;
    stroke: #111;
}

.scribble {
    position: absolute;
    left: -11px;
    top: -3px;
    width: 112px;
    height: 26px;
}

.endpoints {
    display: block;
    width: 68px;
    height: 12px;
    margin: 21px auto 12px 73px;
}

.dialog input {
    width: 60px;
    height: 23px;
    padding: 0 2px 3px;
    background-color: #cce0ff;
    border: 1px solid #7a7a7a;
    box-shadow: inset 0 0 0 1px #fff;
}

.points {
    display: grid;
    grid-template-columns: 60px 37px 60px;
    row-gap: 1px;
    margin-left: 29px;
    align-items: center;
    text-align: center;
}

.angle {
    display: flex;
    align-items: center;
    gap: 6px;
    margin: 12px 0 11px 74px;
}

.angle svg {
    width: 24px;
    height: 20px;
}

.units {
    display: flex;
    flex-direction: column;
    margin: 0 10px 0 11px;
    padding: 4px 0 11px 33px;
    border: 1px solid #dcdcdc;
}

.units > label {
    padding-left: 2px;
    line-height: 15px;
}

.picker {
    position: relative;
    width: 135px;
    margin: 7px 0 5px;
}

.picker select {
    width: 100%;
    height: 21px;
    padding-left: 3px;
    background-color: #e1e1e1;
    border: 1px solid #adadad;
}

.picker.short {
    width: 90px;
    margin-bottom: 12px;
}

.length {
    display: flex;
    gap: 6px;
    height: 31px;
}

.length:last-child {
    height: 25px;
}

.length label {
    width: 23px;
    padding-left: 6px;
    line-height: 16px;
}

.length svg {
    width: 24px;
    height: 26px;
}

.deltas {
    display: flex;
    gap: 6px;
    margin: 17px 0 12px 11px;
}

.deltas label {
    display: flex;
    flex-direction: column;
    align-items: center;
}

.deltas span {
    padding-left: 6px;
    line-height: 14px;
    font-size: 12px;
}

.deltas b {
    font: bold 14px/14px "Liberation Serif", serif;
}

.actions {
    display: flex;
    gap: 8px;
    margin-left: 91px;
}

.actions button {
    display: flex;
    align-items: center;
    justify-content: center;
    width: 52px;
    height: 27px;
    background-color: #e1e1e1;
    border: 1px solid #adadad;
}

.actions .ok {
    border: 2px solid #0078d7;
}

.actions svg {
    width: 20px;
    height: 20px;
}

/* status bar */
.status {
    display: flex;
    align-items: center;
    gap: 5px;
    height: 26px;
    margin-right: -4px;
    flex: none;
    background-color: #f0f0f0;
    border-top: 1px solid #ccc;
    font: 11px "Open Sans", sans-serif;
    overflow: hidden;
}

.prompt {
    flex: 1;
    padding-left: 2px;
}

.status button, .pair label {
    height: 20px;
    flex: none;
    background-color: #d4d4d4;
    border: 1px solid #bbb;
    white-space: nowrap;
}

.pair {
    position: relative;
    display: flex;
    flex: none;
    gap: 1px;
}

.pair label {
    background-color: #f0f0f0;
    line-height: 18px;
    padding: 0 2px;
}

#depth {
    width: 83px;
    height: 21px;
    padding-left: 4px;
    border: 1px solid #7a7a7a;
    color: #fff;
    background: linear-gradient(#0a64c8, #0a64c8) 4px 3px / 17px 14px no-repeat,
        linear-gradient(#ffff80, #ffff80) 2px 2px / 60px 15px no-repeat #fff;
}

.status .color {
    width: 31px;
    background-color: #00ff00;
    color: #052;
}

.black-drop {
    width: 16px;
}

.black-drop::before {
    content: "";
    display: block;
    width: 0;
    margin: 0 auto;
    border: 5px solid transparent;
    border-top: 9px solid #111;
    border-bottom: none;
}

.list {
    position: relative;
    flex: none;
}

.list select {
    display: block;
    width: 100%;
    height: 21px;
    padding-left: 5px;
    background-color: #fff;
    border: 1px solid #7a7a7a;
}

.level .list {
    width: 102px;
}

.style {
    width: 36px;
}

.width {
    width: 64px;
}

.style svg {
    position: absolute;
    left: 4px;
    top: 6px;
    width: 10px;
    height: 10px;
    stroke: #000;
}

.style::after {
    right: 5px;
}

.stroke {
    position: absolute;
    left: 3px;
    top: 10px;
    width: 40px;
    height: 1px;
    background-color: #000;
}

.stroke.bold {
    height: 3px;
    top: 9px;
}

.attr {
    width: 60px;
}

.w12 {
    width: 12px;
}

.w23 {
    width: 23px;
}

.w37 {
    width: 38px;
}

.w46 {
    width: 46px;
}

.w52 {
    width: 52px;
}

/* taskbar */
.taskbar {
    display: flex;
    height: 40px;
    flex: none;
    background-color: #2b2b2b;
    color: #fff;
    font-family: "Open Sans", sans-serif;
}

.start {
    width: 48px;
}

.search {
    display: flex;
    align-items: center;
    gap: 11px;
    width: 288px;
    padding-left: 11px;
    background-color: #f2f2f2;
    border: 1px solid #999;
    color: #444;
    font-size: 14px;
}

.search input::placeholder {
    color: #444;
}

.pin {
    display: flex;
    align-items: center;
    justify-content: center;
    width: 49px;
    border-bottom: 2px solid transparent;
}

.pin svg {
    width: 24px;
    height: 24px;
}

.pin .icon {
    width: 16px;
    height: 16px;
}

.open {
    background: linear-gradient(#76b9ed, #76b9ed) 50% 100% / 40px 2px no-repeat border-box;
}

.current {
    background-color: #505152;
    background-size: 49px 2px;
}

.bars {
    width: 4px;
    height: 16px;
    margin: 12px 12px 0 4px;
    border: solid #555;
    border-width: 0 1px;
}

.tray {
    display: flex;
    align-items: center;
    gap: 9px;
    margin-left: auto;
    padding-right: 4px;
}

.tray svg {
    width: 24px;
    height: 24px;
}

.tray .assist {
    margin-right: 78px;
}

.weather {
    display: flex;
    gap: 9px;
    margin-right: 8px;
    font-size: 13px;
}

.tray .up {
    width: 12px;
    height: 8px;
}

.tray .small {
    width: 16px;
    height: 14px;
}

.lang {
    font-size: 12px;
}

.clock {
    width: 62px;
    font-size: 11px;
    line-height: 18px;
    text-align: center;
}

.tray .notify {
    width: 26px;
    height: 26px;
    margin-left: 2px;
}

.peek {
    width: 1px;
    height: 40px;
    background-color: #666;
}
```
